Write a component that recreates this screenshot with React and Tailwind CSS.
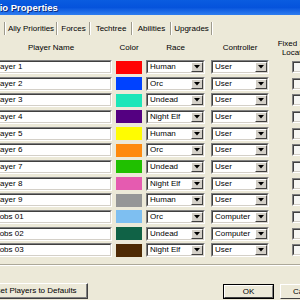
import React from "react";

const players = [
  { name: "Player 1", color: "#ff0303", race: "Human", ctrl: "User" },
  { name: "Player 2", color: "#0042ff", race: "Orc", ctrl: "User" },
  { name: "Player 3", color: "#1ce6b9", race: "Undead", ctrl: "User" },
  { name: "Player 4", color: "#540081", race: "Night Elf", ctrl: "User" },
  { name: "Player 5", color: "#fffc01", race: "Human", ctrl: "User" },
  { name: "Player 6", color: "#fe8a0e", race: "Orc", ctrl: "User" },
  { name: "Player 7", color: "#20c000", race: "Undead", ctrl: "User" },
  { name: "Player 8", color: "#e55bb0", race: "Night Elf", ctrl: "User" },
  { name: "Player 9", color: "#959697", race: "Human", ctrl: "User" },
  { name: "Mobs 01", color: "#7ebff1", race: "Orc", ctrl: "Computer" },
  { name: "Mobs 02", color: "#106246", race: "Undead", ctrl: "Computer" },
  { name: "Mobs 03", color: "#4e2a04", race: "Night Elf", ctrl: "User" },
];

const tabs = [
  { label: "Ally Priorities", w: "w-[50px]" },
  { label: "Forces", w: "w-[31px]" },
  { label: "Techtree", w: "w-[40px]" },
  { label: "Abilities", w: "w-[37px]" },
  { label: "Upgrades", w: "w-[39px]" },
];

function Sep() {
  return (
    <div className="flex h-full shrink-0">
      <div className="w-px h-full bg-[#9d9a8c]" />
      <div className="w-px h-full bg-white" />
    </div>
  );
}

function Combo({ value, width }) {
  return (
    <div className={`${width} h-[14px] flex border border-t-[#808080] border-l-[#808080] border-b-white border-r-white`}>
      <div className="flex-1 flex items-center bg-white border border-t-[#404040] border-l-[#404040] border-b-[#d4d0c8] border-r-[#d4d0c8] pl-[2px]">
        <span className="flex-1 leading-none">{value}</span>
        <div className="w-[12px] h-full flex items-center justify-center bg-[#d4d0c8] border border-t-white border-l-white border-b-[#404040] border-r-[#404040]">
          <svg width="6" height="4" viewBox="0 0 6 4">
            <path d="M0 0h6L3 3.5z" fill="#000" />
          </svg>
        </div>
      </div>
    </div>
  );
}

export default function App() {
  return (
    <div
      className="w-[300px] h-[300px] overflow-hidden bg-[#ece9d8] text-[8px] text-black"
      style={{ fontFamily: '"Liberation Sans", Arial, sans-serif' }}
    >
      {/* title bar */}
      <div className="h-[15px] bg-gradient-to-b from-[#0a5ce0] via-[#0553dc] to-[#2f7df0] flex items-center">
        <span className="-ml-[32px] text-[9.5px] font-bold text-white leading-none whitespace-nowrap [text-shadow:1px_1px_0_#0a2a7a]">
          Scenario Properties
        </span>
      </div>

      {/* tabs */}
      <div className="mt-[7px] h-[13px] flex items-stretch pl-[4px]">
        {tabs.map((t) => (
          <React.Fragment key={t.label}>
            <Sep />
            <div className={`${t.w} shrink-0 flex items-center justify-center whitespace-nowrap`}>{t.label}</div>
          </React.Fragment>
        ))}
        <Sep />
      </div>

      {/* headers */}
      <div className="mt-[3px] h-[20px] flex items-center whitespace-nowrap">
        <div className="-ml-[10px] w-[122px] shrink-0 text-center">Player Name</div>
        <div className="ml-[4px] w-[26px] shrink-0 text-center">Color</div>
        <div className="ml-[4px] w-[59px] shrink-0 text-center">Race</div>
        <div className="ml-[6px] w-[58px] shrink-0 text-center">Controller</div>
        <div className="ml-[8px] w-[40px] shrink-0 text-center leading-[9px]">
          Fixed Start
          <br />
          Location
        </div>
      </div>

      {/* rows */}
      <div className="mt-[2px] flex flex-col gap-[2.67px]">
        {players.map((p) => (
          <div key={p.name} className="h-[14px] flex items-center whitespace-nowrap">
            <div className="-ml-[10px] w-[122px] h-[14px] shrink-0 flex border border-t-[#808080] border-l-[#808080] border-b-white border-r-white">
              <div className="flex-1 flex items-center bg-white border border-t-[#404040] border-l-[#404040] border-b-[#d4d0c8] border-r-[#d4d0c8] pl-[1px]">
                {p.name}
              </div>
            </div>
            <div className="ml-[4px] w-[26px] h-[13px] shrink-0" style={{ backgroundColor: p.color }} />
            <div className="ml-[4px] shrink-0">
              <Combo value={p.race} width="w-[59px]" />
            </div>
            <div className="ml-[6px] shrink-0">
              <Combo value={p.ctrl} width="w-[58px]" />
            </div>
            <div className="ml-[23px] w-[12px] h-[12px] shrink-0 border border-t-[#808080] border-l-[#808080] border-b-white border-r-white">
              <div className="w-full h-full bg-[#f7f7f4] border border-t-[#404040] border-l-[#404040] border-b-[#d4d0c8] border-r-[#d4d0c8]" />
            </div>
          </div>
        ))}
      </div>

      {/* divider */}
      <div className="mt-[7px] h-px bg-[#aca899]" />
      <div className="h-px bg-white" />

      {/* buttons */}
      <div className="mt-[17px] flex items-end whitespace-nowrap">
        <div className="-ml-[25px] w-[113px] h-[16px] shrink-0 flex items-center justify-center bg-[#ece9d8] border border-t-white border-l-white border-b-[#404040] border-r-[#404040] shadow-[inset_-1px_-1px_0_#808080]">
          Reset Players to Defaults
        </div>
        <div className="ml-[135px] w-[51px] h-[15px] shrink-0 border border-black">
          <div className="w-full h-full flex items-center justify-center bg-[#ece9d8] border border-t-white border-l-white border-b-[#404040] border-r-[#808080]">
            OK
          </div>
        </div>
        <div className="ml-[6px] w-[51px] h-[15px] shrink-0 border border-t-white border-l-white border-b-[#404040] border-r-[#404040] flex items-center justify-center">
          Cancel
        </div>
      </div>
    </div>
  );
}
